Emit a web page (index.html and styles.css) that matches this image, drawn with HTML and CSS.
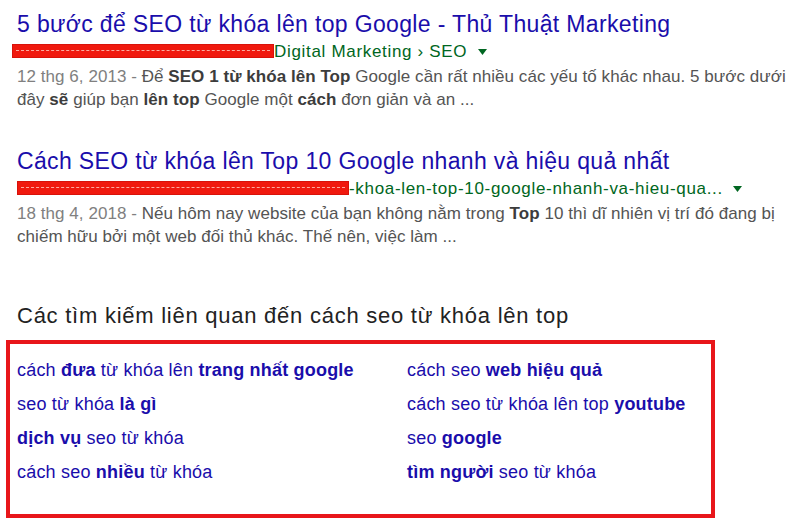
FILE: index.html
```html
<!DOCTYPE html>
<html lang="vi">
<head>
    <meta charset="UTF-8">
    <meta name="viewport" content="width=device-width, initial-scale=1.0">
    <title>Các tìm kiếm liên quan</title>
    <link rel="stylesheet" href="styles.css">
</head>
<body>
    <div class="serp">
        <div class="result">
            <h3 class="title"><a href="#">5 bước để SEO từ khóa lên top Google - Thủ Thuật Marketing</a></h3>
            <div class="url">
                <span class="hidden bar1"><span class="scribble"></span></span>Digital Marketing › SEO
                <svg class="arrow" width="9" height="6" viewBox="0 0 9 6"><path d="M0 0h9L4.5 6z" fill="#006621"/></svg>
            </div>
            <p class="snippet"><span class="date">12 thg 6, 2013 - </span>Để <b>SEO</b> <b>1</b> <b>từ khóa lên Top</b> Google cần rất nhiều các yếu tố khác nhau. 5 bước dưới đây <b>sẽ</b> giúp bạn <b>lên top</b> Google một <b>cách</b> đơn giản và an ...</p>
        </div>
        <div class="result">
            <h3 class="title"><a href="#">Cách SEO từ khóa lên Top 10 Google nhanh và hiệu quả nhất</a></h3>
            <div class="url">
                <span class="hidden bar2"><span class="scribble"></span></span>-khoa-len-top-10-google-nhanh-va-hieu-qua...
                <svg class="arrow" width="9" height="6" viewBox="0 0 9 6"><path d="M0 0h9L4.5 6z" fill="#006621"/></svg>
            </div>
            <p class="snippet"><span class="date">18 thg 4, 2018 - </span>Nếu hôm nay website của bạn không nằm trong <b>Top</b> 10 thì dĩ nhiên vị trí đó đang bị chiếm hữu bởi một web đối thủ khác. Thế nên, việc làm ...</p>
        </div>

        <h2 class="related-head">Các tìm kiếm liên quan đến cách seo từ khóa lên top</h2>
        <div class="related">
            <a href="#">cách <b>đưa</b> từ khóa lên <b>trang nhất google</b></a>
            <a href="#">cách seo <b>web hiệu quả</b></a>
            <a href="#">seo từ khóa <b>là gì</b></a>
            <a href="#">cách seo từ khóa lên top <b>youtube</b></a>
            <a href="#"><b>dịch vụ</b> seo từ khóa</a>
            <a href="#">seo <b>google</b></a>
            <a href="#">cách seo <b>nhiều</b> từ khóa</a>
            <a href="#"><b>tìm người</b> seo từ khóa</a>
        </div>
    </div>
</body>
</html>
```

FILE: styles.css
```css
body {
    margin: 0;
    background-color: #fff;
    font-family: "Liberation Sans", Arial, sans-serif;
}
a {
    text-decoration: none;
    color: #1a0dab;
}
.serp {
    padding: 11px 0 0 17px;
}
.result {
    margin-bottom: 37px;
}
.title {
    margin: 0;
    font-size: 23px;
    line-height: 26px;
    letter-spacing: 0.35px;
    font-weight: normal;
}
.url {
    margin-top: 4px;
    font-size: 17px;
    line-height: 22px;
    letter-spacing: 0.68px;
    color: #006621;
    white-space: nowrap;
}
.hidden {
    display: inline-block;
    vertical-align: -1px;
    height: 14px;
    box-sizing: border-box;
    background-color: #f0190e;
    border: 1px solid #d8120a;
    padding: 5px 3px 0;
}
.bar1 {
    width: 262px;
    margin-left: -5px;
}
.bar2 {
    width: 332px;
}
.scribble {
    display: block;
    border-top: 1px dashed rgba(255, 220, 210, 0.75);
}
.arrow {
    margin-left: 5px;
    vertical-align: 2px;
}
.snippet {
    margin: 2px 0 0;
    max-width: 775px;
    font-size: 17px;
    line-height: 23px;
    letter-spacing: 0.05px;
    color: #545454;
}
.snippet b {
    color: #3c3c3c;
}
.date {
    color: #808080;
}
.related-head {
    margin: 55px 0 11px;
    font-size: 22px;
    line-height: 26px;
    letter-spacing: 0.75px;
    font-weight: normal;
    color: #222;
}
.related {
    margin-left: -11px;
    width: 709px;
    height: 178px;
    box-sizing: border-box;
    border: 4px solid #e8161a;
    padding: 9px 0 0 7px;
    display: grid;
    grid-template-columns: 390px 1fr;
    grid-auto-rows: 34px;
    font-size: 18px;
    line-height: 34px;
    letter-spacing: 0.2px;
}
```
